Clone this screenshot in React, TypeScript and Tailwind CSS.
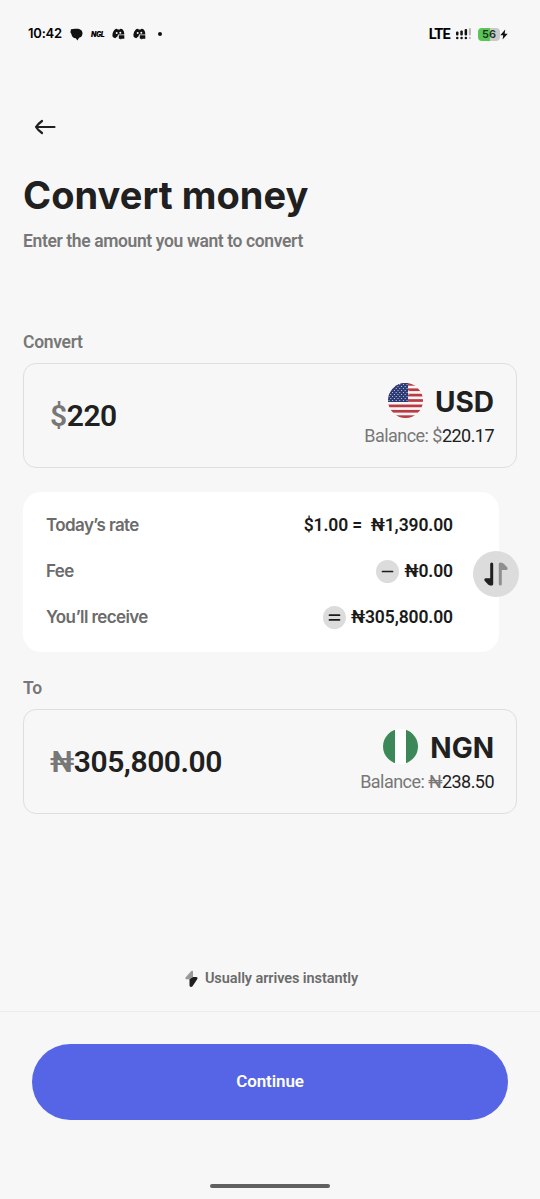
import type { ReactNode } from 'react'

function ChatIcon() {
  return (
    <svg width="13" height="13" viewBox="0 0 13 13" fill="#111">
      <path d="M1 1.200 5 .8C9.500.2 12.600 2 12.500 5.200c0 2.800-1.600 4.200-3.400 4.600L7.400 12.400 5.800 10.200C3.200 10 1.600 8.600 1.500 6.200L.4 4.200z" />
    </svg>
  )
}

function GamepadIcon() {
  return (
    <svg width="13" height="12" viewBox="0 0 13 12">
      <path
        d="M3.400 1 5 .8 5.600 1.600H7.800L8.400.8 10 1C11.600 2.200 12.400 4.200 12.300 6.600H6L5.600 8.200 3.200 10.200C1.500 9.800.4 8.900.4 7.600.4 4.800 1.600 2.500 3.400 1z"
        fill="#111"
      />
      <ellipse cx="4.700" cy="5" rx="1" ry="1.100" fill="#f7f7f7" />
      <ellipse cx="8.300" cy="4.800" rx="1" ry="1" fill="#f7f7f7" />
      <path d="M6.800 7.200h5.500v3.600H9.600L8.600 11.800V10.800H6.800z" fill="#111" />
    </svg>
  )
}

function StatusBar() {
  return (
    <div className="flex h-[68px] shrink-0 items-center justify-between pl-7 pr-8">
      <div className="flex items-center">
        <span className="w-[34px] whitespace-nowrap font-[Inter] text-[13px] font-semibold tracking-[-0.2px] text-black">10:42</span>
        <span className="ml-2"><ChatIcon /></span>
        <span className="ml-2 w-[13px] whitespace-nowrap font-[Inter] text-[7px] font-black italic leading-none tracking-[-0.5px] text-black">NGL</span>
        <span className="ml-2"><GamepadIcon /></span>
        <span className="ml-2"><GamepadIcon /></span>
        <span className="ml-[12px] size-1 rounded-full bg-[#111]" />
      </div>
      <div className="flex items-center">
        <span className="pt-[2px] font-[Roboto] text-[14.500px] font-bold tracking-[-0.7px] text-black">LTE</span>
        <svg className="ml-[6px]" width="16" height="12" viewBox="0 0 16 12">
          <g fill="#111">
            <rect x="0" y="3.500" width="2.500" height="4" rx="1" />
            <rect x="4.300" y="2.500" width="2.500" height="5" rx="1" />
            <rect x="8.600" y="1" width="2.500" height="6.500" rx="1" />
            <circle cx="1.250" cy="10" r="1.250" />
            <circle cx="5.550" cy="10" r="1.250" />
            <circle cx="9.850" cy="10" r="1.250" />
          </g>
          <g fill="#b5b5b5">
            <rect x="12.900" y="0" width="2" height="7.500" rx="1" />
            <circle cx="13.900" cy="10" r="1.100" />
          </g>
        </svg>
        <span className="ml-[6px] flex h-[13px] w-[22px] items-center justify-center rounded-[4px] bg-linear-to-r from-[#5bc456] from-56% to-[#c9c9c9] to-56% font-[Inter] text-[11px] font-semibold leading-none text-[#14331a]">
          56
        </span>
        <svg width="8" height="11" viewBox="0 0 8 11" fill="#111">
          <path d="M5.200.5.300 6.300h2.900L2.600 10.500 7.700 4.700H4.700z" />
        </svg>
      </div>
    </div>
  )
}

function UsFlag() {
  const stars = []
  for (let row = 0; row < 9; row++) {
    for (let col = 0; col < 6; col++) {
      stars.push(<circle key={`${row}-${col}`} cx={1 + col * 3.6 + (row % 2) * 1.8} cy={1.5 + row * 2} r="0.55" />)
    }
  }
  return (
    <svg width="35" height="35" viewBox="0 0 35 35">
      <clipPath id="us">
        <circle cx="17.500" cy="17.500" r="17.500" />
      </clipPath>
      <g clipPath="url(#us)">
        <rect width="35" height="35" fill="#f7f5f5" />
        {[0, 1, 2, 3, 4, 5, 6].map((i) => (
          <rect key={i} y={i * 5.385} width="35" height="2.7" fill="#b93c44" />
        ))}
        <rect width="20" height="19" fill="#2c3b73" />
        <g fill="#dfe3f0">{stars}</g>
      </g>
    </svg>
  )
}

function NigeriaFlag() {
  return (
    <svg width="35" height="35" viewBox="0 0 35 35">
      <clipPath id="ng">
        <circle cx="17.500" cy="17.500" r="17.500" />
      </clipPath>
      <g clipPath="url(#ng)">
        <rect width="35" height="35" fill="#fff" />
        <rect width="12" height="35" fill="#3d8859" />
        <rect x="23" width="12" height="35" fill="#3d8859" />
      </g>
    </svg>
  )
}

type CurrencyCardProps = {
  symbol: string
  amount: string
  code: string
  balance: string
  flag: ReactNode
}

function CurrencyCard({ symbol, amount, code, balance, flag }: CurrencyCardProps) {
  return (
    <div className="flex h-[105px] w-[494px] justify-between rounded-[13px] border border-[#dedede] pl-[26px] pr-[22px]">
      <div className="flex items-center text-[30px] font-semibold tracking-[-0.45px] text-[#202020]">
        <span className="text-[#777]">{symbol}</span>
        {amount}
      </div>
      <div className="flex flex-col items-end pt-[19px]">
        <div className="flex h-[35px] items-center gap-3">
          {flag}
          <span className="pt-[2px] font-[Inter] text-[28px] font-bold leading-none text-[#202020]">{code}</span>
        </div>
        <div className="mt-[6px] text-[18px] leading-6 tracking-[-0.54px] text-[#777]">
          Balance: {symbol}
          <span className="text-[#202020]">{balance}</span>
        </div>
      </div>
    </div>
  )
}

function RateRow({ label, children }: { label: string; children: ReactNode }) {
  return (
    <div className="flex h-6 items-center justify-between">
      <span className="pt-[2px] font-[Inter] text-[17px] font-semibold tracking-[-0.6px] text-[#6b6b6b]">{label}</span>
      <span className="flex items-center whitespace-pre text-[17.500px] font-semibold tracking-[-0.1px] text-[#1b1b1b]">{children}</span>
    </div>
  )
}

function Operator({ equals }: { equals?: boolean }) {
  return (
    <svg className="mr-[5px]" width="23" height="23" viewBox="0 0 23 23">
      <circle cx="11.500" cy="11.500" r="11.500" fill="#dcdcdc" />
      <path d={equals ? 'M6.500 9.200h10M6.500 13.900h10' : 'M6.500 11.500h10'} stroke="#1b1b1b" strokeWidth="1.700" strokeLinecap="round" />
    </svg>
  )
}

export default function App() {
  return (
    <div className="flex h-[1199px] w-[540px] flex-col overflow-hidden bg-[#f7f7f7] font-[Roboto,sans-serif]">
      <StatusBar />

      {/* Header */}
      <div className="px-[23px] pt-[47px]">
        <button className="ml-[11px] flex h-6 items-center" aria-label="Back">
          <svg width="22" height="16" viewBox="0 0 22 16" fill="none" stroke="#202020" strokeWidth="2.200" strokeLinecap="round" strokeLinejoin="round">
            <path d="M20.500 8H2M8 2C6 3.500 3.500 5.500 2 8c1.500 2.500 4 4.500 6 6" />
          </svg>
        </button>
        <h1 className="mt-[33px] h-12 whitespace-nowrap font-[Inter] text-[38px] font-bold leading-[47px] tracking-[0.05px] text-[#202020]">Convert money</h1>
        <p className="mt-[9px] text-[17.500px] font-semibold leading-[25px] tracking-[-0.38px] text-[#777]">Enter the amount you want to convert</p>
      </div>

      {/* Amounts */}
      <div className="px-[23px] pt-[76px]">
        <div className="mb-[9px] text-[17.500px] font-semibold leading-6 tracking-[-0.3px] text-[#777]">Convert</div>
        <CurrencyCard symbol="$" amount="220" code="USD" balance="220.17" flag={<UsFlag />} />

        <div className="relative mt-6 flex h-[160px] w-[476px] flex-col gap-[22px] rounded-[18px] bg-white pl-[23px] pr-[46px] pt-[21px]">
          <RateRow label="Today’s rate">{'$1.00 =  ₦1,390.00'}</RateRow>
          <RateRow label="Fee"><Operator />₦0.00</RateRow>
          <RateRow label="You’ll receive"><Operator equals />₦305,800.00</RateRow>
          <button className="absolute -right-[20px] top-[59px] size-[46px] rounded-full bg-[#dcdcdc]" aria-label="Swap currencies">
            <svg width="46" height="46" viewBox="0 0 46 46" fill="none" strokeWidth="3" strokeLinecap="round" strokeLinejoin="round">
              <path d="M18.700 13v20" stroke="#202020" />
              <path d="M18.700 28h-5.700q-1.500.3-.6 1.600l2.800 3q2 1.700 3.500.8z" fill="#202020" stroke="#202020" strokeWidth="1.500" />
              <path d="M27.300 33V13" stroke="#8f8f8f" />
              <path d="M27.300 18.300h5.700q1.500-.3.6-1.600l-2.800-3q-2-1.700-3.500-.8z" fill="#8f8f8f" stroke="#8f8f8f" strokeWidth="1.500" />
            </svg>
          </button>
        </div>

        <div className="mb-[9px] mt-6 text-[17.500px] font-semibold leading-6 tracking-[-0.3px] text-[#777]">To</div>
        <CurrencyCard symbol="₦" amount="305,800.00" code="NGN" balance="238.50" flag={<NigeriaFlag />} />
      </div>

      {/* Footer */}
      <div className="mt-auto flex flex-col items-center">
        <div className="flex h-6 items-center gap-[7px] pl-[3px] text-[14.500px] font-semibold tracking-[-0.08px] text-[#6b6b6b]">
          <svg width="13" height="18" viewBox="0 0 13 18">
            <path d="M8 1.200C8 .4 6.800.5 6 1.200L.8 7.200C0 8.500.5 9.300 1.800 9.300H4.500L8 7z" fill="#999" />
            <path d="M4.500 9.300 8 7h3.200c1.300 0 1.700 1 1 2.200L7.500 16.200c-1.200 1.200-3 .8-3-.9z" fill="#202020" />
          </svg>
          Usually arrives instantly
        </div>
        <div className="mt-5 flex w-full flex-col items-center border-t border-[#ebebeb] px-8 pt-8">
          <button className="h-[76px] w-full rounded-full bg-[#5565e5] text-[17px] font-semibold tracking-[-0.1px] text-white">Continue</button>
          <div className="mb-[11px] mt-[64px] h-1 w-[120px] rounded-full bg-[#606060]" />
        </div>
      </div>
    </div>
  )
}
